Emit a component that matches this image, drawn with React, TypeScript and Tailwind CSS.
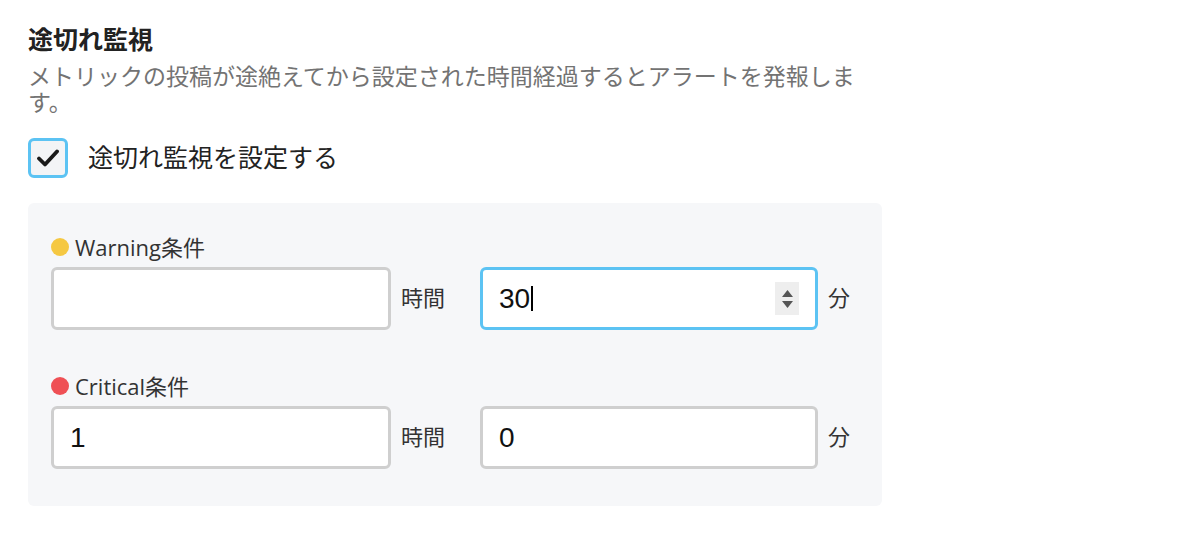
import React from "react";

const jp = { fontFamily: '"Liberation Sans", "Noto Sans CJK JP", sans-serif' };
const lbl = { fontFamily: '"Open Sans", "Noto Sans CJK JP", sans-serif' };

function Field({ value, focused }: { value: string; focused?: boolean }) {
  return (
    <div
      className={
        "flex h-[63px] items-center justify-between rounded-[6px] border-[3px] bg-white pl-[16px] pr-[16px] " +
        (focused ? "border-[#5cc3f3]" : "border-[#cfcfcf]")
      }
    >
      <div className="flex items-center">
        <span className="text-[28px] leading-[32px] text-[#111]" style={{ fontFamily: '"Liberation Sans", sans-serif' }}>
          {value}
        </span>
        {focused && <span className="ml-[1px] h-[25px] w-[1.5px] bg-black" />}
      </div>
      {focused && (
        <div className="flex h-[33px] w-[24px] flex-col items-center justify-center gap-[4px] bg-[#eeeeee]">
          <svg width="11" height="7" viewBox="0 0 11 7">
            <path d="M5.5 0 L11 7 L0 7 Z" fill="#555" />
          </svg>
          <svg width="11" height="7" viewBox="0 0 11 7">
            <path d="M0 0 L11 0 L5.5 7 Z" fill="#555" />
          </svg>
        </div>
      )}
    </div>
  );
}

function Group({
  color,
  label,
  hours,
  mins,
  focusMins,
}: {
  color: string;
  label: string;
  hours: string;
  mins: string;
  focusMins?: boolean;
}) {
  return (
    <div>
      <div className="flex h-[28px] items-center gap-[6px]">
        <span className={"h-[18px] w-[18px] rounded-full " + color} />
        <span className="text-[22px] leading-[28px] text-[#333]" style={lbl}>
          {label}
        </span>
      </div>
      <div className="mt-[6px] flex items-center">
        <div className="w-[340px]">
          <Field value={hours} />
        </div>
        <span className="ml-[10px] w-[44px] text-[22px] leading-[28px] text-[#333]">時間</span>
        <div className="ml-[35px] w-[338px]">
          <Field value={mins} focused={focusMins} />
        </div>
        <span className="ml-[10px] text-[22px] leading-[28px] text-[#333]">分</span>
      </div>
    </div>
  );
}

export default function App() {
  return (
    <div className="h-[543px] w-[1200px] overflow-hidden bg-white pl-[28px] pt-[24px]" style={jp}>
      <div className="w-[854px]">
        <h2 className="text-[25px] font-bold leading-[32px] text-[#222]">途切れ監視</h2>
        <p className="mt-[8px] text-[23px] leading-[26px] text-[#737373]">
          メトリックの投稿が途絶えてから設定された時間経過するとアラートを発報します。
        </p>
        <label className="mt-[22px] flex items-center gap-[20px]">
          <span className="flex h-[40px] w-[40px] items-center justify-center rounded-[6px] border-[3px] border-[#5cc3f3] bg-[#f3f4f6]">
            <svg width="22" height="18" viewBox="0 0 22 18">
              <path d="M2 9.5 L8 15.5 L20 2.5" fill="none" stroke="#1a1a1a" strokeWidth="3.8" strokeLinecap="round" strokeLinejoin="round" />
            </svg>
          </span>
          <span className="text-[25px] leading-[32px] text-[#222]">途切れ監視を設定する</span>
        </label>
        <div className="mt-[25px] flex flex-col gap-[42px] rounded-[6px] bg-[#f6f7f9] px-[23px] pb-[37px] pt-[30px]">
          <Group color="bg-[#f5c842]" label="Warning条件" hours="" mins="30" focusMins />
          <Group color="bg-[#ef5055]" label="Critical条件" hours="1" mins="0" />
        </div>
      </div>
    </div>
  );
}
